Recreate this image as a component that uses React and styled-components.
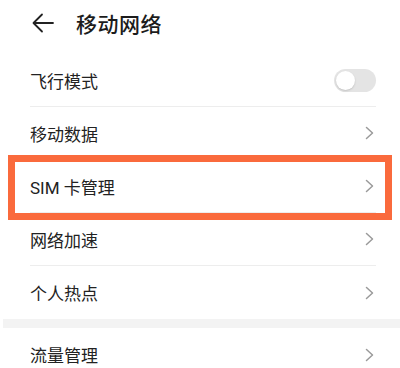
import React from 'react';
import styled, { createGlobalStyle } from 'styled-components';

const GlobalStyle = createGlobalStyle`
  html, body {
    margin: 0;
    padding: 0;
    background: #fff;
  }
  body {
    font-family: Roboto, "Noto Sans CJK SC", sans-serif;
    color: #1f1f1f;
  }
`;

const sections = [
  [
    { label: '飞行模式', type: 'switch' },
    { label: '移动数据' },
    { label: 'SIM 卡管理', highlight: true },
    { label: '网络加速' },
    { label: '个人热点' },
  ],
  [{ label: '流量管理' }],
];

function BackArrow() {
  return (
    <svg width="22" height="20" viewBox="0 0 22 20" fill="none">
      <path d="M21 10H2M10 1.5L1.5 10 10 18.5" stroke="#222" strokeWidth="1.8" strokeLinecap="round" strokeLinejoin="round" />
    </svg>
  );
}

function Chevron() {
  return (
    <svg width="9" height="14" viewBox="0 0 9 14" fill="none">
      <path d="M1.5 1.5L7.5 7 1.5 12.5" stroke="#9a9a9a" strokeWidth="1.5" strokeLinecap="round" strokeLinejoin="round" />
    </svg>
  );
}

function App() {
  return (
    <Page>
      <GlobalStyle />
      <Header>
        <BackArrow />
        <Title>移动网络</Title>
      </Header>
      {sections.map((rows, s) => (
        <React.Fragment key={s}>
          {s > 0 && <Band />}
          <List>
            {rows.map((row, i) => (
              <Row key={row.label} last={i === rows.length - 1}>
                <Label>{row.label}</Label>
                {row.type === 'switch' ? (
                  <Switch>
                    <Knob />
                  </Switch>
                ) : (
                  <Chevron />
                )}
                {row.highlight && <Highlight />}
              </Row>
            ))}
          </List>
        </React.Fragment>
      ))}
    </Page>
  );
}

export default App;

const Page = styled.div`
  width: 400px;
  height: 368px;
  overflow: hidden;
  background: #fff;
`;

const Header = styled.div`
  height: 54px;
  display: flex;
  align-items: center;
  padding: 0 0 8px 32px;
  box-sizing: border-box;
  gap: 22px;
`;

const Title = styled.div`
  font-family: "Noto Sans CJK SC", sans-serif;
  font-size: 21px;
  font-weight: 500;
  color: #1c1c1c;
  letter-spacing: 0.5px;
`;

const List = styled.div`
  display: flex;
  flex-direction: column;
`;

const Row = styled.div`
  position: relative;
  height: 53px;
  display: flex;
  align-items: center;
  justify-content: space-between;
  margin: 0 24px 0 30px;
  padding-right: 2px;
  border-bottom: ${p => (p.last ? 'none' : '1px solid #ededed')};
  box-sizing: border-box;
`;

const Label = styled.span`
  font-family: Roboto, "Noto Sans CJK SC", sans-serif;
  font-size: 17px;
  color: #222;
`;

const Switch = styled.div`
  width: 42px;
  height: 23px;
  border-radius: 12px;
  background: #e4e4e4;
  display: flex;
  align-items: center;
  padding: 0 2px;
  box-sizing: border-box;
  margin-right: -2px;
`;

const Knob = styled.div`
  width: 19px;
  height: 19px;
  border-radius: 50%;
  background: #fff;
  box-shadow: 0 1px 2px rgba(0, 0, 0, 0.15);
`;

const Highlight = styled.div`
  position: absolute;
  top: -5px;
  bottom: -8px;
  left: -22px;
  right: -16px;
  border: 7px solid #fa6a3c;
  pointer-events: none;
`;

const Band = styled.div`
  height: 9px;
  background: #f3f3f3;
  margin-left: 3px;
`;
